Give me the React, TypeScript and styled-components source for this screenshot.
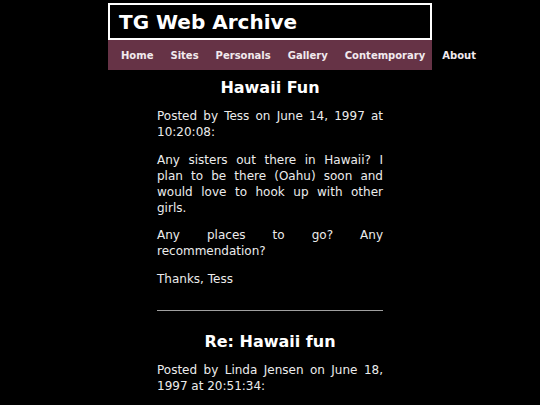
import React from "react";
import styled, { createGlobalStyle } from "styled-components";

const GlobalStyle = createGlobalStyle`
  html, body {
    margin: 0;
    padding: 0;
    background: #000;
  }

  body {
    font-family: "DejaVu Sans", Verdana, sans-serif;
    color: #ececec;
  }
`;

const Masthead = styled.header`
  width: 324px;
  margin: 3px auto 0;
`;

const TitleBox = styled.div`
  box-sizing: border-box;
  height: 37px;
  border: 2px solid #fff;
  padding: 0 9px;
  display: flex;
  align-items: center;
`;

const SiteTitle = styled.h1`
  margin: 0;
  font-size: 20px;
  font-weight: bold;
  color: #fff;
`;

const NavBar = styled.nav`
  height: 30px;
  background: #663346;
  display: flex;
  align-items: center;
  gap: 17px;
  padding-left: 13px;
  white-space: nowrap;
`;

const NavLink = styled.a`
  font-size: 10px;
  font-weight: bold;
  color: #f2eaee;
  text-decoration: none;

  &:hover {
    text-decoration: underline;
  }
`;

const Column = styled.main`
  width: 226px;
  margin: 0 auto;
`;

const Post = styled.article`
  padding-top: 8px;
`;

const PostTitle = styled.h2`
  margin: 0 0 11px;
  font-size: 16px;
  font-weight: bold;
  color: #fff;
  text-align: center;
`;

const Para = styled.p`
  margin: 0 0 11.5px;
  font-size: 12px;
  line-height: 16px;
  text-align: justify;
`;

const Rule = styled.hr`
  margin: 23px 0 13px;
  border: 0;
  border-top: 1px solid #a0a0a0;
  height: 0;
`;

const links = ["Home", "Sites", "Personals", "Gallery", "Contemporary", "About"];

export default function App() {
  return (
    <>
      <GlobalStyle />
      <Masthead>
        <TitleBox>
          <SiteTitle>TG Web Archive</SiteTitle>
        </TitleBox>
        <NavBar>
          {links.map((l) => (
            <NavLink key={l} href="#">
              {l}
            </NavLink>
          ))}
        </NavBar>
      </Masthead>
      <Column>
        <Post>
          <PostTitle>Hawaii Fun</PostTitle>
          <Para>Posted by Tess on June 14, 1997 at 10:20:08:</Para>
          <Para>
            Any sisters out there in Hawaii? I plan to be there (Oahu) soon and
            would love to hook up with other girls.
          </Para>
          <Para>Any places to go? Any recommendation?</Para>
          <Para>Thanks, Tess</Para>
        </Post>
        <Rule />
        <Post>
          <PostTitle>Re: Hawaii fun</PostTitle>
          <Para>Posted by Linda Jensen on June 18, 1997 at 20:51:34:</Para>
        </Post>
      </Column>
    </>
  );
}
